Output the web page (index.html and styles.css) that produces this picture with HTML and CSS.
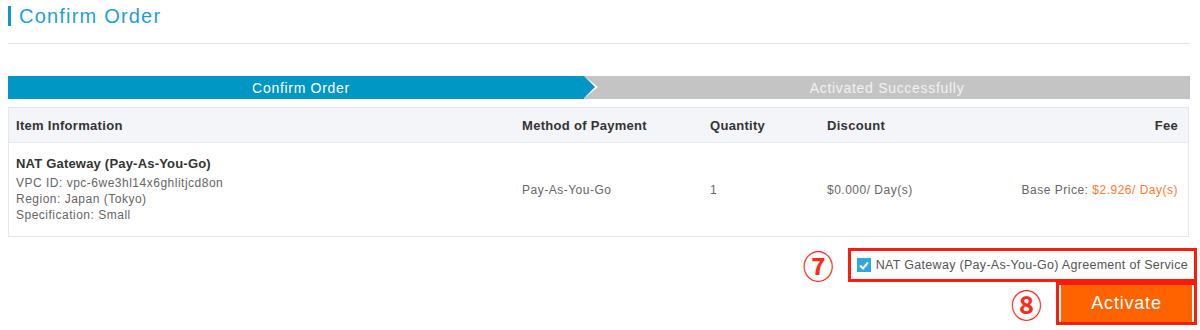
FILE: index.html
```html
<!DOCTYPE html>
<html lang="en">
<head>
    <meta charset="UTF-8">
    <title>Confirm Order</title>
    <link rel="stylesheet" href="styles.css">
</head>
<body>
    <div class="page-title">
        <span class="title-bar"></span>
        <h1>Confirm Order</h1>
    </div>

    <div class="steps">
        <div class="step active">Confirm Order</div>
        <div class="step">Activated Successfully</div>
    </div>

    <div class="order-table">
        <div class="row head">
            <div>Item Information</div>
            <div>Method of Payment</div>
            <div>Quantity</div>
            <div>Discount</div>
            <div class="fee">Fee</div>
        </div>
        <div class="row body">
            <div class="item">
                <div class="item-name">NAT Gateway (Pay-As-You-Go)</div>
                <div>VPC ID: vpc-6we3hl14x6ghlitjcd8on</div>
                <div>Region: Japan (Tokyo)</div>
                <div>Specification: Small</div>
            </div>
            <div>Pay-As-You-Go</div>
            <div>1</div>
            <div>$0.000/ Day(s)</div>
            <div class="fee">Base Price: <span class="price">$2.926/ Day(s)</span></div>
        </div>
    </div>

    <div class="actions">
        <div class="action-line">
            <span class="mark">⑦</span>
            <label class="agree highlight">
                <span class="checkbox">
                    <svg width="10" height="9" viewBox="0 0 10 9"><path d="M1 4.5 L4 7.5 L9 1.5" fill="none" stroke="#fff" stroke-width="2"/></svg>
                </span>
                NAT Gateway (Pay-As-You-Go) Agreement of Service
            </label>
        </div>
        <div class="action-line">
            <span class="mark">⑧</span>
            <div class="highlight btn-wrap">
                <button class="activate">Activate</button>
            </div>
        </div>
    </div>
</body>
</html>
```

FILE: styles.css
```css
body {
    margin: 0;
    padding: 0 8px 0 8px;
    font-family: "Liberation Sans", Arial, sans-serif;
    color: #333;
    background: #fff;
}

.page-title {
    display: flex;
    align-items: center;
    gap: 8px;
    height: 32px;
    padding-top: 0;
    border-bottom: 1px solid #e3e3e3;
    padding-bottom: 11px;
    margin-right: 2px;
}

.title-bar {
    width: 3px;
    height: 20px;
    background: #0e97c8;
}

.page-title h1 {
    margin: 0;
    font-size: 20px;
    font-weight: normal;
    letter-spacing: 1.2px;
    color: #1f9fd4;
}

.steps {
    display: flex;
    margin-top: 32px;
    height: 23px;
    background: #c4c4c4;
    margin-right: 2px;
}

.step {
    flex: 1;
    display: flex;
    justify-content: center;
    align-items: center;
    font-size: 14px;
    letter-spacing: 0.7px;
    color: #f2f2f2;
    position: relative;
}

.step.active {
    flex: 0 0 576px;
    background: #0097c4;
    color: #fff;
    padding-left: 10px;
    box-sizing: border-box;
}

.step.active::before,
.step.active::after {
    content: "";
    position: absolute;
    top: 0;
    border-style: solid;
    border-color: transparent;
    z-index: 1;
}

.step.active::before {
    right: -14px;
    border-width: 11.5px 0 11.5px 14px;
    border-left-color: #fff;
}

.step.active::after {
    right: -11px;
    border-width: 11.5px 0 11.5px 11px;
    border-left-color: #0097c4;
}

.order-table {
    margin-top: 8px;
    border: 1px solid #e4e8ee;
    margin-right: 3px;
}

.row {
    display: grid;
    grid-template-columns: 506px 188px 117px 1fr auto;
    align-items: center;
    padding: 0 10px 0 7px;
}

.row.head {
    height: 34px;
    background: #f4f5f9;
    border-bottom: 1px solid #e4e8ee;
    font-size: 13px;
    font-weight: bold;
    letter-spacing: 0.3px;
    color: #333;
}

.row.body {
    padding-top: 13px;
    padding-bottom: 13px;
    font-size: 12px;
    letter-spacing: 0.5px;
    color: #666;
}

.item {
    line-height: 16px;
}

.item-name {
    font-size: 13px;
    font-weight: bold;
    letter-spacing: 0.2px;
    color: #333;
    margin-bottom: 3px;
}

.fee {
    text-align: right;
}

.price {
    color: #ff7b2e;
}

.actions {
    display: flex;
    flex-direction: column;
    align-items: flex-end;
    margin-top: 11px;
    margin-right: -5px;
}

.action-line {
    display: flex;
    align-items: center;
    gap: 14px;
}

.mark {
    font-family: "Noto Sans CJK JP", "DejaVu Sans", sans-serif;
    font-size: 31px;
    font-weight: bold;
    line-height: 30px;
    color: #ff2a1a;
}

.highlight {
    border: 3px solid #ff1a0a;
}

.agree {
    display: flex;
    align-items: center;
    gap: 5px;
    height: 28px;
    padding: 0 6px;
    font-size: 12.5px;
    letter-spacing: 0.3px;
    color: #555;
}

.checkbox {
    width: 14px;
    height: 14px;
    background: #2fa8dc;
    display: flex;
    align-items: center;
    justify-content: center;
}

.btn-wrap {
    display: flex;
}

.activate {
    width: 135px;
    height: 37px;
    border: none;
    border-left: 2px solid #fff;
    border-right: 2px solid #fff;
    background: #ff6300;
    color: #fff;
    font-family: "Liberation Sans", Arial, sans-serif;
    font-size: 18px;
    letter-spacing: 0.8px;
    padding: 0;
}
```
